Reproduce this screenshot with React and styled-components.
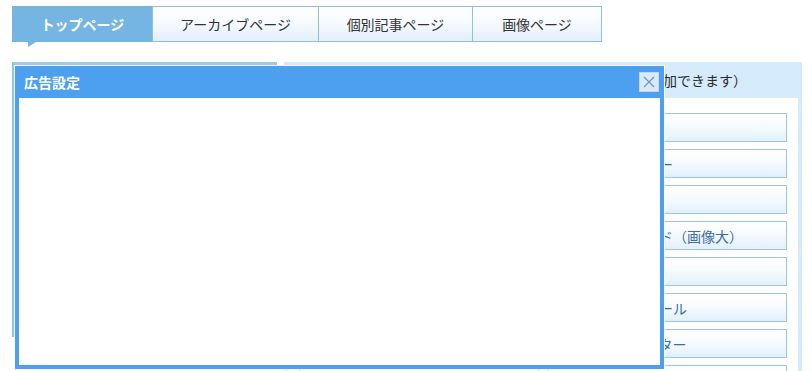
import React from "react";
import styled, { createGlobalStyle } from "styled-components";

const Global = createGlobalStyle`
  html, body { margin: 0; padding: 0; background: #fff; overflow: hidden; }
  body { font-family: "Noto Sans CJK JP", "Noto Sans", sans-serif; font-size: 14px; color: #333; }
  * { box-sizing: border-box; }
`;

const Page = styled.div`
  position: relative;
  width: 812px;
  height: 371px;
  padding: 6px 10px 0 12px;
  overflow: hidden;
`;

const TabBar = styled.div`
  display: flex;
  height: 36px;
`;

const Tab = styled.div`
  position: relative;
  width: ${(p) => p.$w}px;
  height: 36px;
  margin-left: ${(p) => (p.$first ? 0 : -1)}px;
  display: flex;
  align-items: center;
  justify-content: center;
  font-size: 14px;
  line-height: 1;
  white-space: nowrap;
  border: 1px solid ${(p) => (p.$active ? "#74b5e4" : "#8fc0e0")};
  background: ${(p) =>
    p.$active ? "#74b5e4" : "linear-gradient(#ffffff 0%, #f6fafe 45%, #e2effa 100%)"};
  color: ${(p) => (p.$active ? "#fff" : "#333")};
  font-weight: ${(p) => (p.$active ? 700 : 400)};
  ${(p) =>
    p.$active &&
    `
    &::after {
      content: "";
      position: absolute;
      left: 15px;
      bottom: -6px;
      border-top: 5px solid #74b5e4;
      border-right: 8px solid transparent;
    }
  `}
`;

const Panels = styled.div`
  display: flex;
  gap: 7px;
  margin-top: 20px;
`;

const LeftPanel = styled.div`
  width: 265px;
  height: 275px;
  border: 3px solid #8dc3ee;
  border-top: 4px solid #9ccaeb;
  background: #fff;
`;

const RightPanel = styled.div`
  flex: 1;
  background: #d6ebfb;
  padding: 0 4px;
  height: 320px;
`;

const PanelHeader = styled.div`
  height: 36px;
  display: flex;
  align-items: center;
  padding-left: 11px;
  font-size: 14px;
  line-height: 1;
  white-space: nowrap;
  overflow: hidden;
  color: #2b2b2b;
`;

const PanelBody = styled.div`
  background: #fff;
  padding: 15px 11px 15px 11px;
  display: grid;
  grid-template-columns: 1fr 1fr;
  column-gap: 8px;
  row-gap: 7px;
`;

const AdButton = styled.div`
  height: 29px;
  display: flex;
  align-items: center;
  padding-left: 13px;
  border: 1px solid #9ec5e0;
  background: linear-gradient(#ffffff 0%, #f5faff 50%, #e2f0fc 100%);
  color: #3b6ea8;
  font-size: 14px;
  line-height: 1;
  white-space: nowrap;
  overflow: hidden;
`;

const Dialog = styled.div`
  position: absolute;
  left: 15px;
  top: 66px;
  width: 649px;
  height: 303px;
  border: 4px solid #4d9ff0;
  border-top: 0;
  background: #fff;
  box-shadow: 0 0 0 1px rgba(255, 255, 255, 0.9);
  display: flex;
  flex-direction: column;
`;

const DialogHeader = styled.div`
  height: 32px;
  margin: 0 -4px;
  padding: 0 5px 0 9px;
  background: #4d9ff0;
  display: flex;
  align-items: center;
  justify-content: space-between;
`;

const DialogTitle = styled.div`
  color: #fff;
  font-weight: 700;
  font-size: 14px;
  line-height: 1;
`;

const CloseButton = styled.div`
  width: 20px;
  height: 20px;
  border: 1px solid #c2d8ee;
  background: #dde9f6;
  display: flex;
  align-items: center;
  justify-content: center;
`;

const DialogBody = styled.div`
  flex: 1;
  background: #fff;
`;

const tabs = [
  { label: "トップページ", w: 141, active: true },
  { label: "アーカイブページ", w: 167 },
  { label: "個別記事ページ", w: 155 },
  { label: "画像ページ", w: 130 },
];

const ads = [
  ["記事上バナー", "ヘッダー広告"],
  ["記事下バナー", "記事一覧上バナー"],
  ["サイドバー上", "記事上"],
  ["サイドバー下", "レコメンドカード（画像大）"],
  ["フッター", "サイドバー"],
  ["記事中", "新着記事スクロール"],
  ["記事一覧下", "スマホ画面フッター"],
  ["", ""],
];

export default function App() {
  return (
    <>
      <Global />
      <Page>
        <TabBar>
          {tabs.map((t, i) => (
            <Tab key={t.label} $w={t.w} $active={t.active} $first={i === 0}>
              {t.label}
            </Tab>
          ))}
        </TabBar>
        <Panels>
          <LeftPanel />
          <RightPanel>
            <PanelHeader>（ドラッグ＆ドロップで並び替え、クリックで広告枠を追加できます）</PanelHeader>
            <PanelBody>
              {ads.flat().map((a, i) => (
                <AdButton key={i}>{a}</AdButton>
              ))}
            </PanelBody>
          </RightPanel>
        </Panels>
        <Dialog>
          <DialogHeader>
            <DialogTitle>広告設定</DialogTitle>
            <CloseButton>
              <svg width="12" height="12" viewBox="0 0 12 12">
                <path d="M1 1 L11 11 M11 1 L1 11" stroke="#6b98cc" strokeWidth="1.2" fill="none" />
              </svg>
            </CloseButton>
          </DialogHeader>
          <DialogBody />
        </Dialog>
      </Page>
    </>
  );
}
